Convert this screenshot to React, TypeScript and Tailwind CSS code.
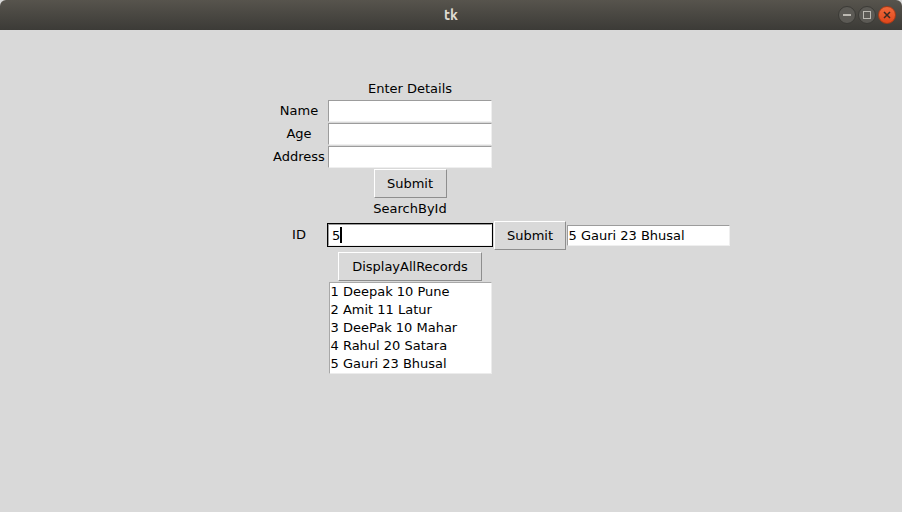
import React from "react";

const records = [
  "1 Deepak 10 Pune",
  "2 Amit 11 Latur",
  "3 DeePak 10 Mahar",
  "4 Rahul 20 Satara",
  "5 Gauri 23 Bhusal",
];

function Entry({ value, focused }: { value?: string; focused?: boolean }) {
  return (
    <div
      className={
        focused
          ? "w-[166px] h-[24px] border border-black"
          : "w-[166px] h-[24px] border border-[#d9d9d9]"
      }
    >
      <div className="w-full h-full bg-white border-t border-l border-[#9c9c9c] border-b-[#efefef] border-r-[#efefef] border-b border-r flex items-center pl-[3px] leading-none">
        {value}
        {focused && <span className="inline-block w-[2px] h-[16px] bg-black" />}
      </div>
    </div>
  );
}

function TkButton({ label, w }: { label: string; w: string }) {
  return (
    <button
      className={`${w} h-[29px] bg-[#d9d9d9] border border-t-white border-l-white border-b-[#8e8e8e] border-r-[#8e8e8e] text-[13px] leading-none`}
    >
      {label}
    </button>
  );
}

export default function App() {
  return (
    <div className="w-[902px] h-[512px] bg-[#d9d9d9] flex flex-col font-['DejaVu_Sans',sans-serif] text-[13px] text-black">
      <div className="h-[30px] rounded-t-[6px] bg-gradient-to-b from-[#57544d] to-[#3c3b37] flex items-center relative">
        <div className="flex-1 text-center font-bold text-[14px] text-[#dfdbd2] font-['Ubuntu','DejaVu_Sans',sans-serif]">
          tk
        </div>
        <div className="absolute right-[6px] top-[6px] flex gap-[2px]">
          <div className="w-[18px] h-[18px] rounded-full bg-[#5c5a55] border border-[#3b3a36] flex items-center justify-center">
            <div className="w-[8px] h-[2px] bg-[#bcb9b2]" />
          </div>
          <div className="w-[18px] h-[18px] rounded-full bg-[#5c5a55] border border-[#3b3a36] flex items-center justify-center">
            <div className="w-[8px] h-[8px] border border-[#bcb9b2]" />
          </div>
          <div className="w-[18px] h-[18px] rounded-full bg-gradient-to-b from-[#f0693a] to-[#e0461a] border border-[#a83a16] flex items-center justify-center">
            <svg width="8" height="8" viewBox="0 0 8 8">
              <path d="M1 1 L7 7 M7 1 L1 7" stroke="#3a2a22" strokeWidth="1.5" />
            </svg>
          </div>
        </div>
      </div>

      <div className="pt-[48px] pl-[272px]">
        <div className="grid grid-cols-[54px_168px_72px_164px]">
          {/* Enter details */}
          <div className="h-[21px]" />
          <div className="h-[21px] flex items-center justify-center">Enter Details</div>
          <div />
          <div />

          {["Name", "Age", "Address"].map((l) => (
            <React.Fragment key={l}>
              <div className="h-[23px] flex items-center justify-center">{l}</div>
              <div className="h-[23px] flex items-center justify-center">
                <Entry />
              </div>
              <div />
              <div />
            </React.Fragment>
          ))}

          <div className="h-[30px]" />
          <div className="h-[30px] flex items-center justify-center">
            <TkButton label="Submit" w="w-[73px]" />
          </div>
          <div />
          <div />

          <div className="h-[22px]" />
          <div className="h-[22px] flex items-center justify-center">SearchById</div>
          <div />
          <div />

          <div className="h-[30px] flex items-center justify-center">ID</div>
          <div className="h-[30px] flex items-center justify-center">
            <Entry value="5" focused />
          </div>
          <div className="h-[30px] flex items-center justify-center">
            <TkButton label="Submit" w="w-[72px]" />
          </div>
          <div className="h-[30px] flex items-center justify-center">
            <div className="w-[163px] h-[21px] bg-white border-t border-l border-[#9c9c9c] border-b-[#efefef] border-r-[#efefef] border-b border-r flex items-center pl-[1px] leading-none">
              5 Gauri 23 Bhusal
            </div>
          </div>

          <div className="h-[32px]" />
          <div className="h-[32px] flex items-center justify-center">
            <TkButton label="DisplayAllRecords" w="w-[144px]" />
          </div>
          <div />
          <div />

          <div />
          <div className="flex justify-center">
            <div className="w-[163px] h-[92px] bg-white border border-[#a8a8a8] border-b-[#ececec] border-r-[#ececec] pl-[1px]">
              {records.map((r) => (
                <div key={r} className="h-[18px] leading-[18px] whitespace-nowrap">
                  {r}
                </div>
              ))}
            </div>
          </div>
          <div />
          <div />
        </div>
      </div>
    </div>
  );
}
